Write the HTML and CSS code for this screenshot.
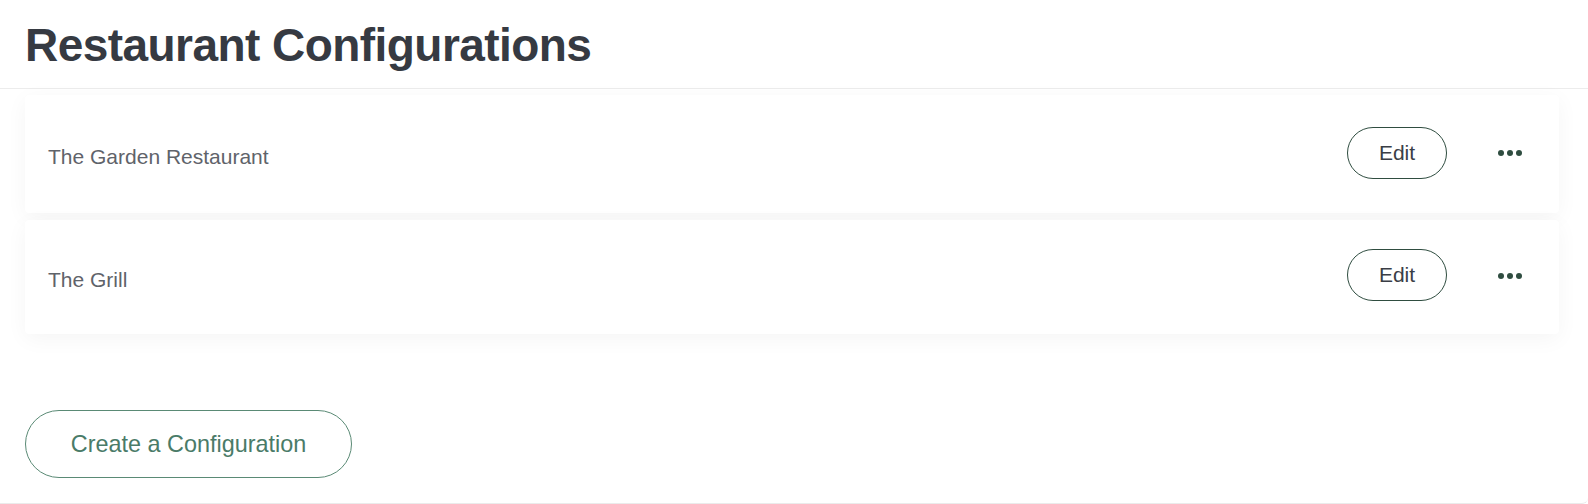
FILE: index.html
```html
<!DOCTYPE html>
<html lang="en">
<head>
<meta charset="utf-8">
<title>Restaurant Configurations</title>
<link rel="stylesheet" href="styles.css">
</head>
<body>
<div class="page">
  <header class="header">
    <h1 class="title">Restaurant Configurations</h1>
  </header>
  <div class="list">
    <div class="card card-first">
      <span class="name">The Garden Restaurant</span>
      <button class="edit-btn">Edit</button>
      <button class="more-btn" aria-label="More options">
        <svg width="24" height="6" viewBox="0 0 24 6"><circle cx="3" cy="3" r="3"/><circle cx="12" cy="3" r="3"/><circle cx="21" cy="3" r="3"/></svg>
      </button>
    </div>
    <div class="card card-second">
      <span class="name">The Grill</span>
      <button class="edit-btn">Edit</button>
      <button class="more-btn" aria-label="More options">
        <svg width="24" height="6" viewBox="0 0 24 6"><circle cx="3" cy="3" r="3"/><circle cx="12" cy="3" r="3"/><circle cx="21" cy="3" r="3"/></svg>
      </button>
    </div>
  </div>
  <div class="actions">
    <button class="create-btn">Create a Configuration</button>
  </div>
</div>
</body>
</html>
```
FILE: styles.css
```css
* { box-sizing: border-box; }
html, body { margin: 0; padding: 0; background: #ffffff; }
body { font-family: "Liberation Sans", Arial, Helvetica, sans-serif; }

.page {
  width: 1588px;
  height: 504px;
  border-bottom: 1px solid #ebebeb;
  border-bottom-right-radius: 6px;
  overflow: hidden;
}

.header {
  height: 89px;
  padding: 22px 0 0 25px;
  border-bottom: 1px solid #ececec;
}

.title {
  margin: 0;
  font-size: 46px;
  line-height: 46px;
  font-weight: 700;
  letter-spacing: -0.55px;
  color: #363a42;
}

.list {
  display: flex;
  flex-direction: column;
  gap: 7px;
  padding: 6px 29px 0 25px;
}

.card {
  display: flex;
  align-items: center;
  background: #ffffff;
  border-radius: 4px;
  padding: 0 37px 0 23px;
  box-shadow: 0 5px 22px rgba(0, 0, 0, 0.045);
}
.card-first { height: 118px; }
.card-second { height: 114px; }

.name {
  flex: 1;
  margin-top: 6px;
  font-size: 21px;
  color: #5f636a;
}

.edit-btn {
  width: 100px;
  height: 52px;
  margin-top: -3px;
  border: 1px solid #2f4d40;
  border-radius: 26px;
  background: #ffffff;
  font-family: inherit;
  font-size: 21px;
  color: #3a3e46;
  padding: 0;
  cursor: pointer;
}
.card-second .edit-btn { margin-top: -5px; }

.more-btn {
  margin-left: 51px;
  margin-top: -3px;
  width: 24px;
  height: 6px;
  padding: 0;
  border: 0;
  background: none;
  display: flex;
  cursor: pointer;
}
.more-btn svg { fill: #2f4d40; display: block; }

.actions {
  padding: 76px 0 0 25px;
}

.create-btn {
  width: 327px;
  height: 68px;
  border: 1px solid #5a8a75;
  border-radius: 34px;
  background: #ffffff;
  font-family: inherit;
  font-size: 23.4px;
  color: #4a7b68;
  padding: 0;
  cursor: pointer;
}
```
